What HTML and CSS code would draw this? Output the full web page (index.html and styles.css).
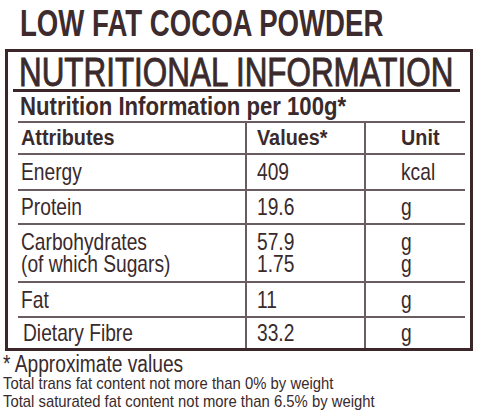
FILE: index.html
```html
<!DOCTYPE html>
<html lang="en">
<head>
    <meta charset="UTF-8">
    <meta name="viewport" content="width=device-width, initial-scale=1.0">
    <title>Low Fat Cocoa Powder - Nutritional Information</title>
    <link rel="stylesheet" href="styles.css">
</head>
<body>

<!-- Nombre del producto -->
<h1 class="titulo"><span>LOW FAT COCOA POWDER</span></h1>

<!-- Caja de informacion nutricional -->
<section class="panel">
    <h2 class="panel-titulo"><span>NUTRITIONAL INFORMATION</span></h2>
    <p class="subtitulo"><span>Nutrition Information per 100g*</span></p>

    <div class="tabla">
        <div class="fila fila-head">
            <div class="celda"><span>Attributes</span></div>
            <div class="celda col-valor"><span>Values*</span></div>
            <div class="celda col-unidad"><span>Unit</span></div>
        </div>
        <div class="fila fila-energia">
            <div class="celda"><span>Energy</span></div>
            <div class="celda col-valor"><span>409</span></div>
            <div class="celda col-unidad"><span>kcal</span></div>
        </div>
        <div class="fila fila-proteina">
            <div class="celda"><span>Protein</span></div>
            <div class="celda col-valor"><span>19.6</span></div>
            <div class="celda col-unidad"><span>g</span></div>
        </div>
        <div class="fila fila-carbos">
            <div class="celda"><span>Carbohydrates<br>(of which Sugars)</span></div>
            <div class="celda col-valor"><span>57.9<br>1.75</span></div>
            <div class="celda col-unidad"><span>g<br>g</span></div>
        </div>
        <div class="fila fila-grasa">
            <div class="celda"><span>Fat</span></div>
            <div class="celda col-valor"><span>11</span></div>
            <div class="celda col-unidad"><span>g</span></div>
        </div>
        <div class="fila fila-fibra">
            <div class="celda fibra"><span>Dietary Fibre</span></div>
            <div class="celda col-valor"><span>33.2</span></div>
            <div class="celda col-unidad"><span>g</span></div>
        </div>
    </div>
</section>

<!-- Notas al pie -->
<div class="notas">
    <p class="nota-principal"><span>* Approximate values</span></p>
    <p class="nota"><span>Total trans fat content not more than 0% by weight</span></p>
    <p class="nota"><span>Total saturated fat content not more than 6.5% by weight</span></p>
</div>

</body>
</html>
```

FILE: styles.css
```css
body {
    margin: 0;
    padding: 0;
    background-color: #ffffff;
    color: #3a2a2c;
    font-family: "Liberation Sans", Arial, sans-serif;
}

/* Todo el texto va un poco condensado */
.titulo span,
.panel-titulo span,
.subtitulo span,
.celda span,
.notas span {
    display: inline-block;
    white-space: nowrap;
    transform-origin: 0 50%;
}

/* Titulo del producto */
.titulo {
    margin: 4px 0 5px 0;
    padding-left: 20px;
    font-size: 37px;
    line-height: 40px;
    font-weight: bold;
    color: #3d2b2e;
}

.titulo span {
    transform: scaleX(0.746);
    margin-right: -126px; /* lo que se encoge con el scaleX */
}

/* Caja principal */
.panel {
    box-sizing: border-box;
    width: 468px;
    margin-left: 5px;
    border: 3px solid #3b2729;
}

.panel-titulo {
    margin: 0 10px 0 5px;
    padding: 3px 0 0 6px;
    font-size: 40px;
    line-height: 34px;
    font-weight: normal;
    -webkit-text-stroke: 0.9px #3a2a2c;
    border-bottom: 3px solid #3b2729;
}

.panel-titulo span {
    transform: scaleX(0.785);
    margin-right: -120px;
}

.subtitulo {
    margin: 0 0 2px 0;
    padding: 1px 0 0 12px;
    font-size: 25px;
    line-height: 26px;
    font-weight: bold;
}

.subtitulo span {
    transform: scaleX(0.886);
}

/* Tabla de valores */
.tabla {
    width: 447px;
    margin-left: 10px;
}

.fila {
    display: grid;
    grid-template-columns: 227px 119px 101px;
    box-sizing: border-box;
    border-top: 2px solid #6a5d5f;
}

.fila-head { height: 32px; }
.fila-energia { height: 36px; }
.fila-proteina { height: 34px; }
.fila-carbos { height: 58px; }
.fila-grasa { height: 35px; }
.fila-fibra { height: 32px; }

.celda {
    display: flex;
    align-items: center;
    padding-left: 3px;
    font-size: 24px;
    line-height: 24px;
}

.celda span {
    transform: scaleX(0.8);
}

.fila-carbos .celda {
    line-height: 22px;
}

.col-valor {
    border-left: 2px solid #6a5d5f;
    padding-left: 10px;
}

.col-unidad {
    border-left: 2px solid #6a5d5f;
    padding-left: 35px;
}

.fibra {
    padding-left: 5px;
}

.fila-head .celda {
    font-size: 22px;
    line-height: 22px;
    font-weight: bold;
}

.fila-head .celda span {
    transform: scaleX(0.9);
}

/* Notas */
.notas {
    margin-top: 2px;
    padding-left: 3px;
}

.notas p {
    margin: 0;
}

.nota-principal {
    font-size: 23px;
    line-height: 22px;
}

.nota-principal span {
    transform: scaleX(0.834);
}

.nota {
    font-size: 17px;
    line-height: 18px;
}

.nota span {
    transform: scaleX(0.874);
}
```
